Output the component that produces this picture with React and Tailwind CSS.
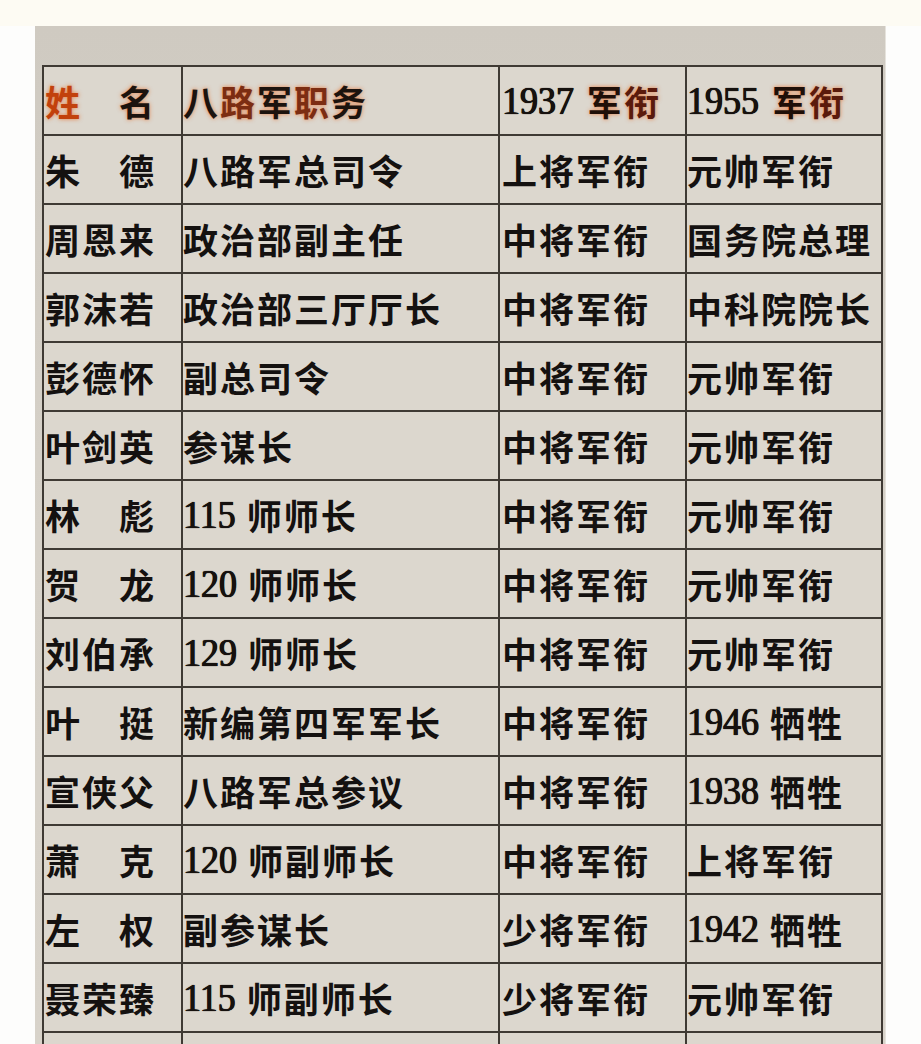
const rows = [
  ["朱德", "八路军总司令", "上将军衔", "元帅军衔"],
  ["周恩来", "政治部副主任", "中将军衔", "国务院总理"],
  ["郭沫若", "政治部三厅厅长", "中将军衔", "中科院院长"],
  ["彭德怀", "副总司令", "中将军衔", "元帅军衔"],
  ["叶剑英", "参谋长", "中将军衔", "元帅军衔"],
  ["林彪", "115 师师长", "中将军衔", "元帅军衔"],
  ["贺龙", "120 师师长", "中将军衔", "元帅军衔"],
  ["刘伯承", "129 师师长", "中将军衔", "元帅军衔"],
  ["叶挺", "新编第四军军长", "中将军衔", "1946 牺牲"],
  ["宣侠父", "八路军总参议", "中将军衔", "1938 牺牲"],
  ["萧克", "120 师副师长", "中将军衔", "上将军衔"],
  ["左权", "副参谋长", "少将军衔", "1942 牺牲"],
  ["聂荣臻", "115 师副师长", "少将军衔", "元帅军衔"],
  ["", "", "", ""],
]

const cell = "flex items-center bg-[#dcd7ce] h-[67px] overflow-hidden whitespace-nowrap"
const glow = "[text-shadow:0_0_4px_rgba(234,88,12,0.7)]"

function Name({ name }) {
  if (name.length === 2) {
    return (
      <span className="flex w-[111px] justify-between">
        <span>{name[0]}</span>
        <span>{name[1]}</span>
      </span>
    )
  }
  return <span>{name}</span>
}

function Num({ children }) {
  return (
    <span
      className="inline-block scale-y-[1.12] text-[36px] font-normal tracking-normal text-[#16110e] [text-shadow:0.4px_0_0_#16110e,-0.4px_0_0_#16110e,0_0_1px_#16110e]"
      style={{ fontFamily: '"Liberation Serif", serif' }}
    >
      {children}
    </span>
  )
}

function Text({ value }) {
  const m = value.match(/^(\d+) (.*)$/)
  if (!m) return value
  return (
    <>
      <Num>{m[1]}</Num>
      <span className="ml-[11px]">{m[2]}</span>
    </>
  )
}

export default function App() {
  return (
    <div className="h-[1044px] overflow-hidden bg-[#fdfdfc]">
      <div className="h-[26px] bg-[#fdfbf3]" />
      <div
        className="ml-[35px] w-[851px] h-[1018px] bg-gradient-to-b from-[#cfcac1] via-[#d6d1c8] to-[#d8d3ca] pl-[7px] pt-[39px] border-r border-[#e6e3dc]"
        style={{ fontFamily: '"Noto Sans CJK SC", "Noto Sans", sans-serif' }}
      >
        <div className="grid w-[841px] grid-cols-[137px_315px_185px_194px] gap-[2px] bg-[#3f3a34] p-[2px] text-[35px] font-bold tracking-[2px] text-[#141110] leading-none">
          {/* header */}
          <div className={`${cell} pl-px`}>
            <span className="flex w-[111px] justify-between">
              <span className={`text-[#c2410c] ${glow}`}>姓</span>
              <span className={`text-[#1c130e] ${glow}`}>名</span>
            </span>
          </div>
          <div className={`${cell} text-[#1c130e] ${glow}`}>
            <span>八</span>
            <span className="text-[#7c2d12]">路</span>
            <span>军</span>
            <span className="text-[#7c2d12]">职</span>
            <span>务</span>
          </div>
          <div className={`${cell} pl-[2px]`}>
            <Num>1937</Num>
            <span className={`ml-[13px] text-[#1f0f08] ${glow}`}>
              军<span className="text-[#5a1a0c]">衔</span>
            </span>
          </div>
          <div className={cell}>
            <Num>1955</Num>
            <span className={`ml-[13px] text-[#1f0f08] ${glow}`}>
              军<span className="text-[#5a1a0c]">衔</span>
            </span>
          </div>

          {rows.map((r, i) => (
            <div key={i} className="contents">
              <div className={`${cell} pl-px`}>
                <Name name={r[0]} />
              </div>
              <div className={cell}>
                <Text value={r[1]} />
              </div>
              <div className={`${cell} pl-[2px]`}>
                <Text value={r[2]} />
              </div>
              <div className={cell}>
                <Text value={r[3]} />
              </div>
            </div>
          ))}
        </div>
      </div>
    </div>
  )
}
